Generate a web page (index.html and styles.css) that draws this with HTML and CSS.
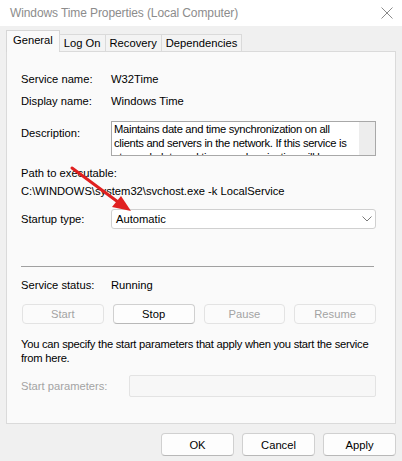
FILE: index.html
```html
<!doctype html>
<html lang="en">
<head>
    <meta charset="UTF-8">
    <title>Windows Time Properties (Local Computer)</title>
    <link rel="stylesheet" href="styles.css">
</head>
<body>
<div class="window">
    <div class="titlebar">
        <span class="titlebar__text">Windows Time Properties (Local Computer)</span>
        <svg class="titlebar__close" width="12" height="12" viewBox="0 0 12 12">
            <path d="M0.5 0.5 L11.5 11.5 M11.5 0.5 L0.5 11.5" stroke="#8a8a8a" stroke-width="1" fill="none"/>
        </svg>
    </div>
    <div class="dialog">
        <div class="tabs">
            <span class="tab tab--active">General</span>
            <span class="tab">Log On</span>
            <span class="tab">Recovery</span>
            <span class="tab">Dependencies</span>
        </div>
        <div class="panel">
            <div class="row row--first">
                <span class="row__label">Service name:</span>
                <span>W32Time</span>
            </div>
            <div class="row">
                <span class="row__label">Display name:</span>
                <span>Windows Time</span>
            </div>
            <div class="row row--desc">
                <span class="row__label row__label--desc">Description:</span>
                <div class="desc">
                    <div class="desc__text">Maintains date and time synchronization on all clients and servers in the network. If this service is stopped, date and time synchronization will be unavailable.</div>
                    <div class="desc__scroll"></div>
                </div>
            </div>
            <div class="path">
                <div>Path to executable:</div>
                <div>C:\WINDOWS\system32\svchost.exe -k LocalService</div>
            </div>
            <div class="row row--startup">
                <span class="row__label">Startup type:</span>
                <div class="combo">
                    <span>Automatic</span>
                    <svg width="10" height="6" viewBox="0 0 10 6">
                        <path d="M0.5 0.5 L5 5 L9.5 0.5" stroke="#7a7a7a" fill="none"/>
                    </svg>
                </div>
            </div>
            <div class="separator"></div>
            <div class="row row--status">
                <span class="row__label">Service status:</span>
                <span>Running</span>
            </div>
            <div class="controls">
                <button class="btn" disabled>Start</button>
                <button class="btn">Stop</button>
                <button class="btn" disabled>Pause</button>
                <button class="btn" disabled>Resume</button>
            </div>
            <p class="hint">You can specify the start parameters that apply when you start the service from here.</p>
            <div class="params">
                <span class="params__label">Start parameters:</span>
                <div class="params__input"></div>
            </div>
        </div>
        <div class="actions">
            <button class="btn btn--action">OK</button>
            <button class="btn btn--action">Cancel</button>
            <button class="btn btn--action">Apply</button>
        </div>
    </div>
    <svg class="arrow" width="402" height="461" viewBox="0 0 402 461">
        <line x1="72" y1="168" x2="118" y2="202" stroke="#e02020" stroke-width="3" stroke-linecap="round"/>
        <polygon points="131,211 112,207 121,196" fill="#e02020"/>
    </svg>
</div>
</body>
</html>
```

FILE: styles.css
```css
body {
    margin: 0;
    font-family: "Liberation Sans", Arial, sans-serif;
    font-size: 11.2px;
    color: #000;
}

.window {
    position: relative;
    width: 402px;
    height: 461px;
    background: #f0f0f0;
    overflow: hidden;
}

.titlebar {
    height: 26px;
    background: #fff;
    display: flex;
    align-items: center;
    justify-content: space-between;
    padding: 0 9px 0 10px;
}

.titlebar__text {
    color: #8c8c8c;
    font-size: 12px;
    letter-spacing: -0.1px;
}

.dialog {
    padding: 5px 6px 0 6px;
}

.tabs {
    display: flex;
    align-items: flex-end;
    height: 20px;
    position: relative;
    z-index: 1;
}

.tab {
    height: 16px;
    line-height: 16px;
    padding: 0 4px;
    border: 1px solid #dadada;
    border-bottom: none;
    background: #f3f3f3;
    margin-left: -1px;
}

.tab--active {
    height: 21px;
    line-height: 18px;
    margin-left: 0;
    margin-bottom: -1px;
    padding: 0 6px;
    background: #fafafa;
    border-color: #d6d6d6;
}

.panel {
    border: 1px solid #dadada;
    background: #fafafa;
    height: 371px;
    padding: 0 19px 0 14px;
}

.row {
    display: flex;
    align-items: center;
    height: 22px;
}

.row--first {
    margin-top: 16px;
}

.row__label {
    width: 90px;
    flex-shrink: 0;
}

.row--desc {
    margin-top: 9px;
    height: 35px;
    align-items: flex-start;
}

.row__label--desc {
    padding-top: 6px;
}

.desc {
    flex: 1;
    display: flex;
    height: 35px;
    box-sizing: border-box;
    border: 1px solid #a8a8a8;
    background: #fff;
    overflow: hidden;
}

.desc__text {
    flex: 1;
    padding: 0 2px;
    line-height: 14px;
    letter-spacing: -0.3px;
}

.desc__scroll {
    width: 16px;
    background: #ededed;
}

.path {
    margin-top: 8px;
    line-height: 18px;
}

.row--startup {
    margin-top: 9px;
    height: 20px;
}

.combo {
    flex: 1;
    height: 20px;
    box-sizing: border-box;
    border: 1px solid #d0d0d0;
    border-radius: 3px;
    background: #fff;
    display: flex;
    align-items: center;
    justify-content: space-between;
    padding: 0 3px 0 4px;
}

.separator {
    margin: 37px 0 0 0;
    width: 353px;
    height: 1px;
    background: #a0a0a0;
}

.row--status {
    margin-top: 9px;
    height: 18px;
}

.controls {
    margin: 10px 0 0 1px;
    width: 354px;
    display: grid;
    grid-template-columns: repeat(4, 1fr);
    gap: 9px;
}

.btn {
    height: 20px;
    padding: 0;
    font-family: inherit;
    font-size: 11.2px;
    color: #000;
    background: #fdfdfd;
    border: 1px solid #d0d0d0;
    border-bottom-color: #b8b8b8;
    border-radius: 4px;
}

.btn:disabled {
    color: #a3a3a3;
    background: #fbfbfb;
    border-color: #e3e3e3;
}

.hint {
    margin: 13px 0 0 0;
    line-height: 14px;
    letter-spacing: -0.25px;
}

.params {
    margin-top: 10px;
    display: flex;
    align-items: center;
}

.params__label {
    width: 108px;
    color: #a3a3a3;
}

.params__input {
    flex: 1;
    height: 22px;
    box-sizing: border-box;
    border: 1px solid #e3e3e3;
    border-radius: 2px;
    background: #f7f7f7;
}

.actions {
    margin-top: 9px;
    display: flex;
    justify-content: flex-end;
    gap: 8px;
}

.btn--action {
    width: 73px;
    height: 23px;
}

.arrow {
    position: absolute;
    left: 0;
    top: 0;
    pointer-events: none;
}
```
